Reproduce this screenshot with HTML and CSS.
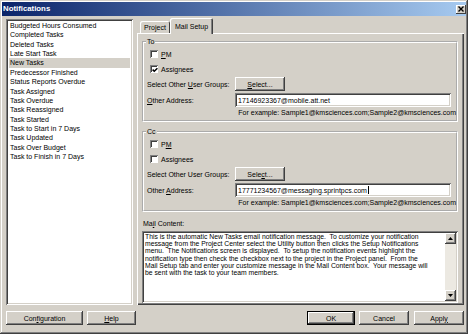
FILE: index.html
```html
<!DOCTYPE html>
<html>
<head>
<meta charset="utf-8">
<link rel="stylesheet" href="styles.css">
</head>
<body>
<div class="window">
  <div class="titlebar">
    <span class="title">Notifications</span>
    <span class="close"><svg width="6" height="6" viewBox="0 0 6 6"><path d="M0.5 0.5 L5.5 5.5 M5.5 0.5 L0.5 5.5" stroke="#000" stroke-width="1.4"/></svg></span>
  </div>
  <div class="main">
    <div class="list">
      <div class="item">Budgeted Hours Consumed</div>
      <div class="item">Completed Tasks</div>
      <div class="item">Deleted Tasks</div>
      <div class="item">Late Start Task</div>
      <div class="item sel">New Tasks</div>
      <div class="item">Predecessor Finished</div>
      <div class="item">Status Reports Overdue</div>
      <div class="item">Task Assigned</div>
      <div class="item">Task Overdue</div>
      <div class="item">Task Reassigned</div>
      <div class="item">Task Started</div>
      <div class="item">Task to Start in 7 Days</div>
      <div class="item">Task Updated</div>
      <div class="item">Task Over Budget</div>
      <div class="item">Task to Finish in 7 Days</div>
    </div>
    <div class="tabs">
      <div class="tabstrip">
        <div class="tab">Project</div>
        <div class="tab active">Mail Setup</div>
      </div>
      <div class="panel">
        <fieldset class="group">
          <legend>To</legend>
          <div class="gin">
            <div class="cbrow"><span class="cb"></span><span><u>P</u>M</span></div>
            <div class="cbrow"><span class="cb"><svg width="6" height="6" viewBox="0 0 6 6"><path d="M0.6 2.6 L2.3 4.3 L5.4 1.2" fill="none" stroke="#000" stroke-width="1.5"/></svg></span><span>Assi<u>g</u>nees</span></div>
            <div class="frow first"><span class="lbl">Select Other <u>U</u>ser Groups:</span><span class="btn sel-btn"><span><u>S</u>elect...</span></span></div>
            <div class="frow"><span class="lbl"><u>O</u>ther Address:</span><span class="input">17146923367@mobile.att.net</span></div>
            <div class="example">For example: Sample1@kmsciences.com;Sample2@kmsciences.com</div>
          </div>
        </fieldset>
        <fieldset class="group cc">
          <legend>Cc</legend>
          <div class="gin">
            <div class="cbrow"><span class="cb"></span><span>P<u>M</u></span></div>
            <div class="cbrow"><span class="cb"></span><span>Assignees</span></div>
            <div class="frow first"><span class="lbl">Select Other User Groups:</span><span class="btn sel-btn"><span>Sele<u>c</u>t...</span></span></div>
            <div class="frow"><span class="lbl">Other <u>A</u>ddress:</span><span class="input">17771234567@messaging.sprintpcs.com<span class="caret"></span></span></div>
            <div class="example">For example: Sample1@kmsciences.com;Sample2@kmsciences.com</div>
          </div>
        </fieldset>
        <div class="mclabel">Ma<u>i</u>l Content:</div>
        <div class="textarea">
          <div class="ta-text">This is the automatic New Tasks email notification message.  To customize your notification
message from the Project Center select the Utility button then clicks the Setup Notifications
menu.  The Notifications screen is displayed.  To setup the notification events highlight the
notification type then check the checkbox next to the project in the Project panel.  From the
Mail Setup tab and enter your customize message in the Mail Content box.  Your message will
be sent with the task to your team members.</div>
          <div class="scroll">
            <span class="arrow"><svg width="5" height="3" viewBox="0 0 5 3"><path d="M0 3 L2.5 0 L5 3 Z" fill="#000"/></svg></span>
            <span class="track"></span>
            <span class="arrow"><svg width="5" height="3" viewBox="0 0 5 3"><path d="M0 0 L2.5 3 L5 0 Z" fill="#000"/></svg></span>
          </div>
        </div>
      </div>
    </div>
  </div>
  <div class="footer">
    <span class="btn b-config">Con<u>f</u>iguration</span>
    <span class="btn b-help"><u>H</u>elp</span>
    <span class="spacer"></span>
    <span class="btn b-ok default">OK</span>
    <span class="btn b-cancel">Cancel</span>
    <span class="btn b-apply">Appl<u>y</u></span>
  </div>
</div>
</body>
</html>
```
FILE: styles.css
```css
* { box-sizing: border-box; }
html, body { margin: 0; padding: 0; }
body {
  width: 468px; height: 334px; overflow: hidden;
  font-family: "Liberation Sans", Arial, sans-serif;
  font-size: 7px; color: #000; background: #d4d0c8;
}
u { text-decoration: underline; text-underline-offset: 1px; }
.window {
  width: 468px; height: 334px; padding: 2px;
  background: #d4d0c8;
  display: flex; flex-direction: column;
  box-shadow: inset -1px -1px #404040, inset 1px 1px #d4d0c8, inset -2px -2px #808080, inset 2px 2px #fff;
}
.titlebar {
  height: 14px; flex: none;
  background: linear-gradient(to right, #0a246a, #a6caf0);
  display: flex; align-items: center; justify-content: space-between;
  padding: 0 0 0 1px;
}
.title { color: #fff; font-weight: bold; font-size: 7.8px; line-height: 14px; }
.close {
  width: 10px; height: 9px; background: #d4d0c8;
  box-shadow: inset -1px -1px #404040, inset 1px 1px #fff;
  display: flex; align-items: center; justify-content: center;
}
.main { display: flex; align-items: flex-start; padding: 1px 2px 0 4px; flex: none; }
.list {
  width: 127px; height: 286px; margin-top: 2px; flex: none;
  background: #fff; padding: 2px 0 0 2px;
  box-shadow: inset 1px 1px #808080, inset -1px -1px #fff, inset 2px 2px #404040, inset -2px -2px #d4d0c8;
}
.item { height: 9.36px; line-height: 9.36px; padding-left: 1px; margin: 0 3px 0 1px; white-space: nowrap; }
.item.sel { background: #d4d0c8; }
.tabs { width: 327px; margin-left: 4px; display: flex; flex-direction: column; flex: none; }
.tabstrip { height: 16px; display: flex; align-items: flex-end; padding-left: 3px; position: relative; z-index: 1; }
.tab {
  height: 12px; width: 30px; display: flex; align-items: center; justify-content: center;
  box-shadow: inset 1px 1px #fff, inset -1px 0 #404040;
  border-radius: 2px 2px 0 0;
}
.tab.active { height: 16px; width: 43px; margin-bottom: -1px; background: #d4d0c8; padding-top: 1px; box-shadow: inset 1px 1px #fff, inset -1px 0 #404040, inset -2px 0 #808080; }
.panel {
  height: 272px; background: #d4d0c8;
  box-shadow: inset 1px 1px #fff, inset -1px -1px #404040, inset -2px -2px #808080;
  padding: 5px 6px 0 5px;
  display: flex; flex-direction: column;
}
.group { margin: 0; padding: 0; height: 84px; border: 2px groove #fff; min-width: 0; }
.group.cc { margin-top: 6px; }
legend { margin-left: 2px; padding: 0 1px; line-height: 8px; font-size: 7px; }
.gin { padding: 3px 0 0 3px; display: flex; flex-direction: column; }
.cbrow { height: 10px; display: flex; align-items: center; padding-left: 3px; gap: 3px; }
.cbrow + .cbrow { margin-top: 5px; }
.cb {
  width: 8px; height: 8px; background: #fff;
  box-shadow: inset 1px 1px #808080, inset -1px -1px #fff, inset 2px 2px #404040;
  display: flex; align-items: center; justify-content: center; padding: 1px 0 0 1px;
}
.frow { height: 14px; display: flex; align-items: center; margin-top: 2px; }
.frow.first { margin-top: 3px; }
.lbl { width: 88px; flex: none; white-space: nowrap; }
.btn {
  height: 14px; background: #d4d0c8; flex: none;
  box-shadow: inset -1px -1px #404040, inset 1px 1px #fff, inset -2px -2px #808080;
  display: flex; align-items: center; justify-content: center; white-space: nowrap;
}
.btn.default { box-shadow: inset 0 0 0 1px #000, inset -2px -2px #404040, inset 2px 2px #fff, inset -3px -3px #808080; }
.sel-btn { width: 50px; }
.input {
  width: 216px; height: 14px; background: #fff; padding-left: 3px;
  display: flex; align-items: center; white-space: nowrap;
  box-shadow: inset 1px 1px #808080, inset -1px -1px #fff, inset 2px 2px #404040, inset -2px -2px #d4d0c8;
}
.caret { display: inline-block; width: 1px; height: 8px; background: #000; margin-left: 1px; }
.example { height: 10px; line-height: 10px; text-align: right; margin-top: 1px; white-space: nowrap; }
.mclabel { margin-top: 8px; height: 8px; line-height: 8px; padding-left: 1px; }
.textarea {
  margin-top: 3px; height: 72px; background: #fff; display: flex; padding: 2px;
  box-shadow: inset 1px 1px #808080, inset -1px -1px #fff, inset 2px 2px #404040, inset -2px -2px #d4d0c8;
}
.ta-text { flex: 1; white-space: pre; line-height: 7.2px; font-size: 6.8px; padding: 0 0 0 1px; overflow: hidden; }
.scroll { width: 11px; display: flex; flex-direction: column; }
.arrow {
  height: 11px; background: #d4d0c8; display: flex; align-items: center; justify-content: center;
  box-shadow: inset -1px -1px #404040, inset 1px 1px #fff, inset -2px -2px #808080;
}
.track { flex: 1; background: #ece9e2; }
.footer { display: flex; margin-top: 6px; padding: 0 2px 0 4px; }
.b-config { width: 77px; }
.b-help { width: 49px; margin-left: 4px; }
.spacer { flex: 1; }
.b-ok { width: 48px; }
.b-cancel { width: 50px; margin-left: 4px; }
.b-apply { width: 50px; margin-left: 5px; }
```
